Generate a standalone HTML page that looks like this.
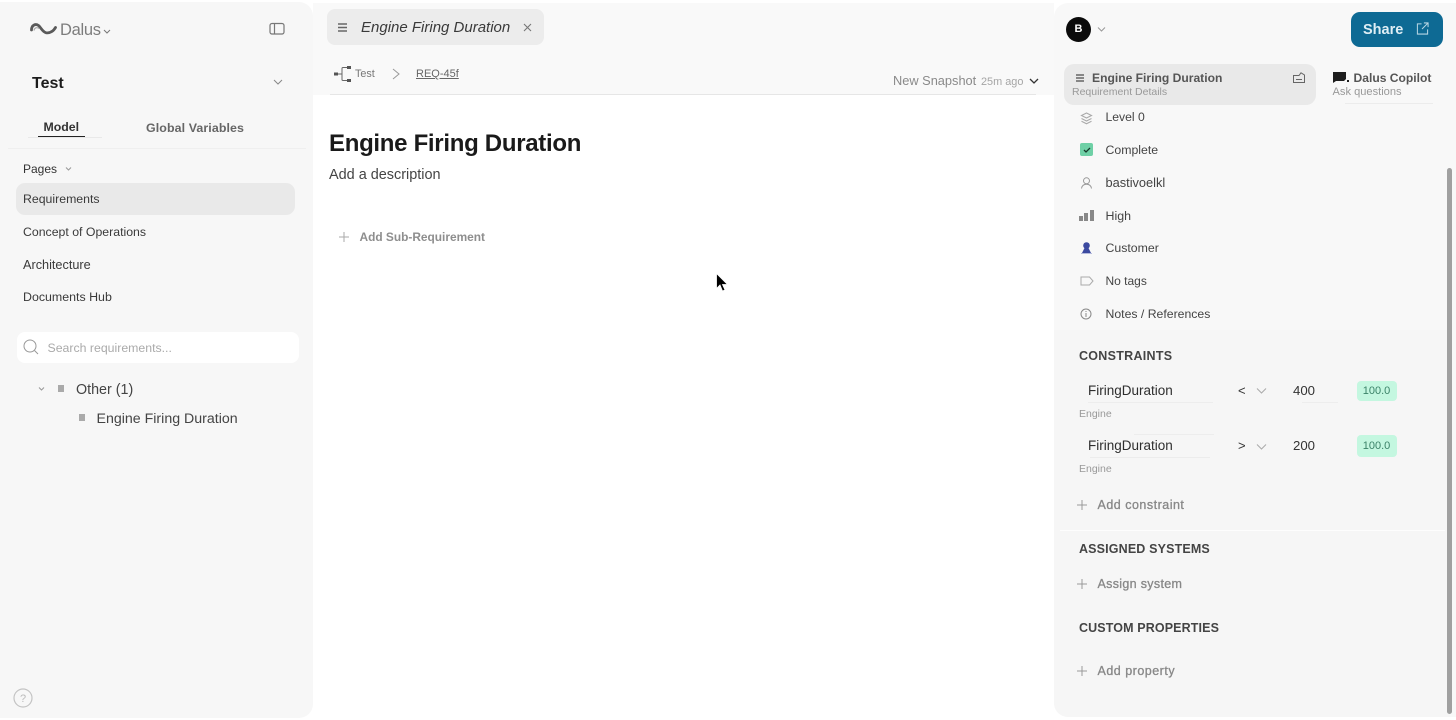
<!DOCTYPE html>
<html lang="en">
<head>
<meta charset="utf-8">
<title>Dalus - Engine Firing Duration</title>
<style>
html,body{margin:0;padding:0;width:1456px;height:720px;overflow:hidden;background:#fff;}
body{position:relative;font-family:"Liberation Sans",sans-serif;color:#2a2a2a;-webkit-font-smoothing:antialiased;}
.a{position:absolute;}
.t{position:absolute;white-space:nowrap;line-height:16px;}
svg{position:absolute;overflow:visible;}
</style>
</head>
<body>
<!-- panels -->
<div class="a" style="left:0;top:2px;width:313px;height:716px;background:#f7f7f7;border-radius:0 14px 14px 0;"></div>
<div class="a" style="left:313px;top:3px;width:741px;height:92px;background:#f9f9f9;"></div>
<div class="a" style="left:1054px;top:3px;width:402px;height:714px;background:#f8f8f8;border-radius:14px 0 0 14px;"></div>
<div class="a" style="left:1054px;top:330px;width:396px;height:387px;background:#f6f6f6;border-radius:0 0 0 14px;"></div>

<!-- LEFT -->
<svg style="left:30px;top:22px" width="28" height="14" viewBox="0 0 28 14"><path d="M1.5 8C1.5 3 5.500 1.500 8.500 3.500C11 5.500 12.500 10 16 10.700C20 11.400 23.500 9 25.500 5.500" fill="none" stroke="#5a5a5a" stroke-width="2.800" stroke-linecap="round"/><path d="M4 8.500C4.500 5.500 7 5 9 6.500" fill="none" stroke="#aaa" stroke-width="1.200"/></svg>
<div class="t" style="left:60px;top:21px;font-size:16.500px;line-height:18px;color:#7d7d7d;letter-spacing:-.3px">Dalus</div>
<svg style="left:103px;top:29px" width="8" height="5"><path d="M1 1L4 4L7 1" fill="none" stroke="#777" stroke-width="1"/></svg>
<svg style="left:269px;top:22px" width="16" height="14"><rect x="1" y="1.500" width="14" height="10.500" rx="2" fill="none" stroke="#777" stroke-width="1.200"/><path d="M5.500 1.500V12" stroke="#777" stroke-width="1.200"/></svg>

<div class="t" style="left:32px;top:75px;font-size:16px;line-height:18px;font-weight:700;color:#1c1c1c">Test</div>
<svg style="left:273px;top:79px" width="10" height="6"><path d="M1 1L5 5L9 1" fill="none" stroke="#888" stroke-width="1"/></svg>

<div class="t" style="left:43.500px;top:119px;font-size:12.300px;font-weight:700;color:#333">Model</div>
<div class="a" style="left:38px;top:135.500px;width:47px;height:2px;background:#222"></div>
<div class="a" style="left:28px;top:137px;width:74px;height:1px;background:#e9e9e9"></div>
<div class="t" style="left:146px;top:119.500px;font-size:12.400px;font-weight:700;color:#666;letter-spacing:.1px">Global Variables</div>
<div class="a" style="left:8px;top:148px;width:298px;height:1px;background:#efefef"></div>

<div class="t" style="left:23px;top:160.500px;font-size:12px;color:#333">Pages</div>
<svg style="left:65px;top:167px" width="7" height="4"><path d="M1 .5L3.500 3L6 .5" fill="none" stroke="#999" stroke-width="1"/></svg>
<div class="a" style="left:16px;top:183px;width:279px;height:32px;background:#e9e9e9;border-radius:9px"></div>
<div class="t" style="left:23px;top:191px;font-size:12.300px;color:#3a3a3a">Requirements</div>
<div class="t" style="left:23px;top:224px;font-size:12.300px;color:#3a3a3a">Concept of Operations</div>
<div class="t" style="left:23px;top:257px;font-size:12.700px;color:#3a3a3a">Architecture</div>
<div class="t" style="left:23px;top:289px;font-size:12.400px;color:#3a3a3a">Documents Hub</div>

<div class="a" style="left:17px;top:332px;width:282px;height:31px;background:#fff;border-radius:8px"></div>
<svg style="left:23px;top:339px" width="16" height="17"><circle cx="7" cy="7" r="6" fill="none" stroke="#999" stroke-width="1"/><path d="M11.500 11.500L15 15" stroke="#999" stroke-width="1"/></svg>
<div class="t" style="left:47.500px;top:339.500px;font-size:12.300px;color:#aaa">Search requirements...</div>

<svg style="left:38px;top:387px" width="7" height="4"><path d="M1 .5L3.500 3L6 .5" fill="none" stroke="#999" stroke-width="1"/></svg>
<div class="a" style="left:58px;top:385px;width:6px;height:7px;background:#aaa"></div>
<div class="t" style="left:76px;top:381.500px;font-size:14.300px;color:#444">Other (1)</div>
<div class="a" style="left:79px;top:414px;width:6px;height:7px;background:#aaa"></div>
<div class="t" style="left:96.500px;top:410.500px;font-size:14.200px;color:#444">Engine Firing Duration</div>

<svg style="left:13px;top:688px" width="20" height="20"><circle cx="10" cy="10" r="9" fill="none" stroke="#c4c4c4" stroke-width="1.200"/><text x="10" y="14" font-size="11" fill="#bbb" text-anchor="middle" font-family="Liberation Sans, sans-serif">?</text></svg>

<!-- MIDDLE -->
<div class="a" style="left:327px;top:9px;width:217px;height:36px;background:#ececec;border-radius:8px"></div>
<svg style="left:338px;top:23px" width="9" height="9"><path d="M0 1H9M0 4.500H9M0 8H9" stroke="#666" stroke-width="1.500"/></svg>
<div class="t" style="left:361px;top:20px;font-size:15px;font-style:italic;color:#3a3a3a">Engine Firing Duration</div>
<svg style="left:523px;top:23px" width="9" height="9"><path d="M1 1L8 8M8 1L1 8" stroke="#777" stroke-width="1.100"/></svg>

<svg style="left:334px;top:65px" width="18" height="18"><rect x="0" y="7.500" width="4" height="3" fill="#555"/><path d="M4 9H8M8 9V3.500Q8 2.500 9 2.500H13M8 9V14.500Q8 15.500 9 15.500H13" fill="none" stroke="#666" stroke-width="1"/><rect x="13" y="1" width="4" height="3" fill="#555"/><rect x="13" y="14" width="4" height="3" fill="#555"/></svg>
<div class="t" style="left:355px;top:66px;font-size:10.800px;color:#777">Test</div>
<svg style="left:392px;top:68px" width="8" height="12"><path d="M1 1L7 6L1 11" fill="none" stroke="#999" stroke-width="1"/></svg>
<div class="t" style="left:416px;top:66px;font-size:11px;color:#666;text-decoration:underline">REQ-45f</div>

<div class="t" style="left:893px;top:73px;font-size:12.800px;color:#8a8a8a">New Snapshot</div>
<div class="t" style="left:981px;top:74px;font-size:10.900px;color:#a5a5a5">25m ago</div>
<svg style="left:1029px;top:78px" width="10" height="7"><path d="M1 1L5 5L9 1" fill="none" stroke="#333" stroke-width="1.300"/></svg>
<div class="a" style="left:330px;top:94px;width:706px;height:1px;background:#e6e6e6"></div>

<div class="t" style="left:329px;top:129px;font-size:24px;line-height:30px;font-weight:700;color:#1a1a1a;letter-spacing:-.3px">Engine Firing Duration</div>
<div class="t" style="left:329px;top:165.500px;font-size:14.450px;line-height:18px;color:#444">Add a description</div>
<svg style="left:339px;top:232px" width="10" height="10"><path d="M5 0V10M0 5H10" stroke="#aaa" stroke-width="1"/></svg>
<div class="t" style="left:359.500px;top:229px;font-size:11.900px;font-weight:700;color:#8e8e8e">Add Sub-Requirement</div>

<svg style="left:716px;top:272.500px" width="13" height="20"><path d="M.5 .5V15.500L4 12L6.500 18L9 17L6.500 11.500H11.500Z" fill="#000" stroke="#fff" stroke-width=".8"/></svg>

<!-- RIGHT -->
<div class="a" style="left:1066px;top:17px;width:25px;height:25px;border-radius:50%;background:#0b0b0b"></div>
<div class="t" style="left:1066px;top:21px;width:25px;text-align:center;font-size:11px;font-weight:700;color:#fff">B</div>
<svg style="left:1097px;top:27px" width="9" height="5"><path d="M1 .5L4.500 4L8 .5" fill="none" stroke="#999" stroke-width="1"/></svg>
<div class="a" style="left:1351px;top:12px;width:92px;height:35px;background:#0e6a94;border-radius:9px"></div>
<div class="t" style="left:1363px;top:21.500px;font-size:14.500px;font-weight:700;color:#dfeef5">Share</div>
<svg style="left:1416px;top:22px" width="13" height="13" viewBox="0 0 14 14"><path d="M6 2H1.500V13H12.500V8" fill="none" stroke="#b9d6e3" stroke-width="1.100"/><path d="M6.500 7.500L13 1M8.500 1H13V5.500" fill="none" stroke="#b9d6e3" stroke-width="1.100"/></svg>

<div class="a" style="left:1064px;top:64px;width:252px;height:41px;background:#e9e9e9;border-radius:10px"></div>
<svg style="left:1076px;top:74px" width="8" height="8"><path d="M0 1H8M0 4H8M0 7H8" stroke="#666" stroke-width="1.400"/></svg>
<div class="t" style="left:1092px;top:69.500px;font-size:12.100px;font-weight:700;color:#555">Engine Firing Duration</div>
<div class="t" style="left:1072px;top:84px;font-size:10.500px;color:#999">Requirement Details</div>
<svg style="left:1293px;top:72px" width="12" height="11"><path d="M.5 3.500H6L8 .8L11.500 3V10.500H.5Z" fill="none" stroke="#666" stroke-width="1"/><path d="M3 7.500H9" stroke="#666" stroke-width="1"/></svg>
<svg style="left:1333px;top:72px" width="16" height="11"><path d="M0 0H13V7L11 9H3L0 11Z" fill="#1d1d1d"/><rect x="14" y="8" width="2" height="2" fill="#1d1d1d"/></svg>
<div class="t" style="left:1353.500px;top:69.500px;font-size:12.100px;font-weight:700;color:#555">Dalus Copilot</div>
<div class="t" style="left:1332.500px;top:84px;font-size:11.100px;color:#999">Ask questions</div>
<div class="a" style="left:1345px;top:103px;width:88px;height:1px;background:#ececec"></div>

<svg style="left:1081px;top:112px" width="11" height="13"><path d="M5.500 1L10.500 3.500L5.500 6L.5 3.500Z M.5 6.500L5.500 9L10.500 6.500M.5 9.300L5.500 11.800L10.500 9.300" fill="none" stroke="#aaa" stroke-width="1.100"/></svg>
<div class="t" style="left:1105.500px;top:109px;font-size:12.200px;color:#444">Level 0</div>

<div class="a" style="left:1080px;top:143px;width:13px;height:13px;background:#6fd0a6;border-radius:2px"></div>
<svg style="left:1083px;top:147px" width="8" height="6"><path d="M1 3L3 5L7 1" fill="none" stroke="#173a2c" stroke-width="1.300"/></svg>
<div class="t" style="left:1105.500px;top:142px;font-size:12.300px;color:#444">Complete</div>

<svg style="left:1081px;top:177px" width="11" height="12"><circle cx="5.500" cy="3.800" r="3" fill="none" stroke="#999" stroke-width="1"/><path d="M.5 11.500C1 8.500 3 7.300 5.500 7.300S10 8.500 10.500 11.500" fill="none" stroke="#999" stroke-width="1"/></svg>
<div class="t" style="left:1105.500px;top:175px;font-size:12.800px;color:#444">bastivoelkl</div>

<div class="a" style="left:1079px;top:216px;width:3.500px;height:5px;background:#888"></div>
<div class="a" style="left:1084px;top:213px;width:4px;height:8px;background:#888"></div>
<div class="a" style="left:1089.500px;top:210px;width:4px;height:11px;background:#888"></div>
<div class="t" style="left:1105.500px;top:207.500px;font-size:12.400px;color:#444">High</div>

<svg style="left:1081px;top:242px" width="11" height="12"><circle cx="5.500" cy="3.500" r="3.300" fill="#3c4aa0"/><path d="M3.500 6L1 11H10L7.500 6Z" fill="#3c4aa0"/><path d="M0 11.500H11" stroke="#b5bbdc" stroke-width="1"/></svg>
<div class="t" style="left:1105.500px;top:240px;font-size:12.300px;color:#444">Customer</div>

<svg style="left:1080px;top:276px" width="14" height="10"><path d="M1 1H9.500L13 5L9.500 9H1Z" fill="none" stroke="#aaa" stroke-width="1"/></svg>
<div class="t" style="left:1105.500px;top:273px;font-size:12px;color:#444">No tags</div>

<svg style="left:1080px;top:308px" width="12" height="12"><circle cx="6" cy="6" r="5" fill="none" stroke="#888" stroke-width="1"/><path d="M6 5V9M6 3V4" stroke="#888" stroke-width="1"/></svg>
<div class="t" style="left:1105.500px;top:306px;font-size:12.250px;color:#444">Notes / References</div>

<div class="t" style="left:1079px;top:347.500px;font-size:12.500px;font-weight:700;color:#444;letter-spacing:.28px">CONSTRAINTS</div>

<div class="t" style="left:1088px;top:382.500px;font-size:13.500px;color:#2e2e2e">FiringDuration</div>
<div class="a" style="left:1088px;top:402px;width:125px;height:1px;background:#ededed"></div>
<div class="t" style="left:1238px;top:383px;font-size:13px;color:#333">&lt;</div>
<svg style="left:1256px;top:388px" width="11" height="6"><path d="M1 .5L5.500 5L10 .5" fill="none" stroke="#aaa" stroke-width="1"/></svg>
<div class="t" style="left:1293px;top:382.500px;font-size:13.200px;color:#333">400</div>
<div class="a" style="left:1302px;top:402px;width:36px;height:1px;background:#ededed"></div>
<div class="a" style="left:1357px;top:381px;width:40px;height:20px;background:#c4f7e0;border-radius:4px"></div>
<div class="t" style="left:1357px;top:383px;width:39px;text-align:center;font-size:11px;color:#3b8268">100.0</div>
<div class="t" style="left:1079px;top:405.500px;font-size:10.500px;color:#999">Engine</div>

<div class="t" style="left:1088px;top:437.500px;font-size:13.500px;color:#2e2e2e">FiringDuration</div>
<div class="a" style="left:1134px;top:434px;width:80px;height:1px;background:#ededed"></div>
<div class="a" style="left:1090px;top:457px;width:120px;height:1px;background:#ececec"></div>
<div class="t" style="left:1238px;top:438px;font-size:13px;color:#333">&gt;</div>
<svg style="left:1256px;top:444px" width="11" height="6"><path d="M1 .5L5.500 5L10 .5" fill="none" stroke="#aaa" stroke-width="1"/></svg>
<div class="t" style="left:1293px;top:437.500px;font-size:13.200px;color:#333">200</div>
<div class="a" style="left:1357px;top:435px;width:40px;height:22px;background:#c4f7e0;border-radius:4px"></div>
<div class="t" style="left:1357px;top:438px;width:39px;text-align:center;font-size:11px;color:#3b8268">100.0</div>
<div class="t" style="left:1079px;top:461px;font-size:10.500px;color:#999">Engine</div>

<svg style="left:1077px;top:500px" width="10" height="10"><path d="M5 0V10M0 5H10" stroke="#999" stroke-width="1"/></svg>
<div class="t" style="left:1097.500px;top:497px;font-size:12.500px;color:#888;-webkit-text-stroke:.3px #888;letter-spacing:.5px">Add constraint</div>
<div class="a" style="left:1060px;top:530px;width:385px;height:1px;background:#fdfdfd"></div>

<div class="t" style="left:1079px;top:541px;font-size:12.500px;font-weight:700;color:#444;letter-spacing:.15px">ASSIGNED SYSTEMS</div>
<svg style="left:1077px;top:579px" width="10" height="10"><path d="M5 0V10M0 5H10" stroke="#999" stroke-width="1"/></svg>
<div class="t" style="left:1097.500px;top:576px;font-size:12.500px;color:#888;-webkit-text-stroke:.3px #888;letter-spacing:.32px">Assign system</div>

<div class="t" style="left:1079px;top:620px;font-size:12.500px;font-weight:700;color:#444;letter-spacing:.12px">CUSTOM PROPERTIES</div>
<svg style="left:1077px;top:666px" width="10" height="10"><path d="M5 0V10M0 5H10" stroke="#999" stroke-width="1"/></svg>
<div class="t" style="left:1097.500px;top:663px;font-size:12.500px;color:#888;-webkit-text-stroke:.3px #888;letter-spacing:.5px">Add property</div>

<!-- scrollbar -->
<div class="a" style="left:1447px;top:168px;width:5px;height:546px;background:#a0a0a0;border-radius:3px"></div>
</body>
</html>
